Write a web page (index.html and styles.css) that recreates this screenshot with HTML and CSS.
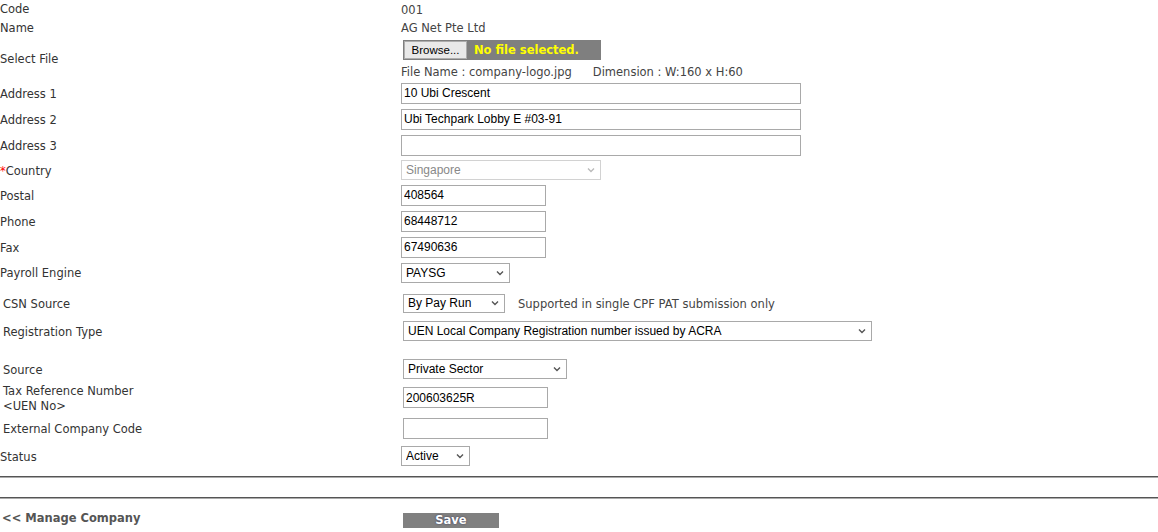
FILE: index.html
```html
<!DOCTYPE html>
<html lang="en">
<head>
    <meta charset="UTF-8">
    <meta name="viewport" content="width=device-width, initial-scale=1.0">
    <title>Company Profile</title>
    <link rel="stylesheet" href="styles.css">
</head>
<body>

<form class="company-form" onsubmit="return false;">
    <div class="row row-code">
        <div class="label">Code</div>
        <div class="value plain">001</div>
    </div>
    <div class="row row-name">
        <div class="label">Name</div>
        <div class="value plain">AG Net Pte Ltd</div>
    </div>
    <div class="row row-file">
        <div class="label">Select File</div>
        <div class="value file-cell">
            <div class="file-box">
                <button type="button" class="browse-btn">Browse...</button>
                <span class="file-status">No file selected.</span>
            </div>
            <div class="file-info">File Name : company-logo.jpg<span class="dimension">Dimension : W:160 x H:60</span></div>
        </div>
    </div>
    <div class="row">
        <div class="label">Address 1</div>
        <div class="value"><input class="text text-long" type="text" value="10 Ubi Crescent"></div>
    </div>
    <div class="row">
        <div class="label">Address 2</div>
        <div class="value"><input class="text text-long" type="text" value="Ubi Techpark Lobby E #03-91"></div>
    </div>
    <div class="row">
        <div class="label">Address 3</div>
        <div class="value"><input class="text text-long" type="text" value=""></div>
    </div>
    <div class="row row-country">
        <div class="label"><span class="required">*</span>Country</div>
        <div class="value">
            <select class="select select-country" disabled>
                <option>Singapore</option>
            </select>
        </div>
    </div>
    <div class="row">
        <div class="label">Postal</div>
        <div class="value"><input class="text text-short" type="text" value="408564"></div>
    </div>
    <div class="row">
        <div class="label">Phone</div>
        <div class="value"><input class="text text-short" type="text" value="68448712"></div>
    </div>
    <div class="row">
        <div class="label">Fax</div>
        <div class="value"><input class="text text-short" type="text" value="67490636"></div>
    </div>
    <div class="row row-payroll">
        <div class="label">Payroll Engine</div>
        <div class="value">
            <select class="select select-payroll">
                <option>PAYSG</option>
            </select>
        </div>
    </div>
    <div class="row row-csn">
        <div class="label indent">CSN Source</div>
        <div class="value shift">
            <select class="select select-csn">
                <option>By Pay Run</option>
            </select>
            <span class="note">Supported in single CPF PAT submission only</span>
        </div>
    </div>
    <div class="row row-reg">
        <div class="label indent">Registration Type</div>
        <div class="value shift">
            <select class="select select-reg">
                <option>UEN Local Company Registration number issued by ACRA</option>
            </select>
        </div>
    </div>
    <div class="row">
        <div class="label indent">Source</div>
        <div class="value shift">
            <select class="select select-source">
                <option>Private Sector</option>
            </select>
        </div>
    </div>
    <div class="row row-tax">
        <div class="label indent">Tax Reference Number<br>&lt;UEN No&gt;</div>
        <div class="value shift"><input class="text text-short" type="text" value="200603625R"></div>
    </div>
    <div class="row row-ext">
        <div class="label indent">External Company Code</div>
        <div class="value shift"><input class="text text-short" type="text" value=""></div>
    </div>
    <div class="row">
        <div class="label">Status</div>
        <div class="value">
            <select class="select select-status">
                <option>Active</option>
            </select>
        </div>
    </div>

    <div class="divider"></div>
    <div class="divider divider-second"></div>

    <div class="footer">
        <a class="back-link" href="#">&lt;&lt; Manage Company</a>
        <button type="submit" class="save-btn">Save</button>
    </div>
</form>

</body>
</html>
```

FILE: styles.css
```css
body {
    margin: 0;
    font-family: "DejaVu Sans", Verdana, sans-serif;
    font-size: 11.5px;
    color: #333;
    background-color: #fff;
}
.company-form {
    margin: 0;
}
.row {
    display: flex;
    align-items: center;
    height: 26px;
}
.row-code {
    height: 17px;
}
.row-name {
    height: 20px;
}
.row-file {
    height: 43px;
}
.row-country {
    height: 24px;
}
.row-payroll {
    height: 25px;
}
.row-csn {
    height: 36px;
}
.row-reg {
    height: 20px;
    margin-bottom: 15px;
}
.row-tax {
    height: 31px;
}
.row-ext {
    height: 30px;
}
.label {
    width: 401px;
    flex: none;
    box-sizing: border-box;
    padding-top: 2px;
    line-height: 15px;
}
.label.indent {
    padding-left: 3px;
}
.required {
    color: #f00;
}
.value {
    display: flex;
    align-items: center;
    color: #444;
}
.value.plain {
    padding-top: 2px;
}
.value.shift {
    padding-left: 2px;
}
.file-cell {
    flex-direction: column;
    align-items: flex-start;
    gap: 5px;
}
.file-box {
    display: flex;
    align-items: center;
    width: 198px;
    height: 20px;
    margin-left: 2px;
    padding-left: 1px;
    box-sizing: border-box;
    background-color: #7f7f7f;
}
.browse-btn {
    width: 63px;
    height: 18px;
    padding: 0;
    font-family: "Liberation Sans", Arial, sans-serif;
    font-size: 11.5px;
    color: #000;
    background-color: #e9e9e9;
    border: 1px solid #adadad;
    border-radius: 0;
}
.file-status {
    margin-left: 7px;
    font-weight: bold;
    color: #ffff00;
}
.file-info {
    line-height: 12px;
    padding-top: 1px;
}
.dimension {
    margin-left: 21px;
}
.text {
    height: 21px;
    box-sizing: border-box;
    padding: 0 2px;
    font-family: "Liberation Sans", Arial, sans-serif;
    font-size: 12px;
    color: #000;
    background-color: #fff;
    border: 1px solid #a9a9a9;
    border-radius: 0;
    outline: none;
}
.text-long {
    width: 400px;
}
.text-short {
    width: 145px;
}
.select {
    appearance: none;
    -webkit-appearance: none;
    height: 20px;
    box-sizing: border-box;
    padding: 0 16px 0 4px;
    font-family: "Liberation Sans", Arial, sans-serif;
    font-size: 12px;
    color: #000;
    border: 1px solid #a9a9a9;
    border-radius: 0;
    background: #fff url("data:image/svg+xml,%3Csvg xmlns='http://www.w3.org/2000/svg' width='8' height='6'%3E%3Cpath d='M1 1.5L4 4.5L7 1.5' fill='none' stroke='%23555' stroke-width='1.4'/%3E%3C/svg%3E") no-repeat right 5px center;
}
.select-country {
    width: 200px;
    color: #888;
    border-color: #d2d2d2;
    background-image: url("data:image/svg+xml,%3Csvg xmlns='http://www.w3.org/2000/svg' width='8' height='6'%3E%3Cpath d='M1 1.5L4 4.5L7 1.5' fill='none' stroke='%23bbb' stroke-width='1.4'/%3E%3C/svg%3E");
    opacity: 1;
}
.select-payroll {
    width: 109px;
}
.select-csn {
    width: 102px;
    height: 19px;
}
.note {
    margin-left: 13px;
    padding-top: 2px;
}
.select-reg {
    width: 469px;
}
.select-source {
    width: 164px;
}
.select-status {
    width: 69px;
}
.divider {
    margin-top: 7px;
    border-top: 1px solid #555;
    border-bottom: 1px solid #ababab;
}
.divider-second {
    margin-top: 19px;
}
.footer {
    display: flex;
    align-items: flex-start;
    padding-top: 13px;
}
.back-link {
    width: 403px;
    flex: none;
    padding-left: 2px;
    box-sizing: border-box;
    font-weight: bold;
    color: #555;
    text-decoration: none;
    line-height: 12px;
}
.save-btn {
    width: 96px;
    height: 15px;
    margin-top: 1px;
    padding: 0;
    font-family: "DejaVu Sans", Verdana, sans-serif;
    font-size: 11.5px;
    font-weight: bold;
    line-height: 15px;
    color: #fff;
    text-shadow: 0 0 2px #335;
    background-color: #808080;
    border: none;
    border-radius: 0;
}
```
